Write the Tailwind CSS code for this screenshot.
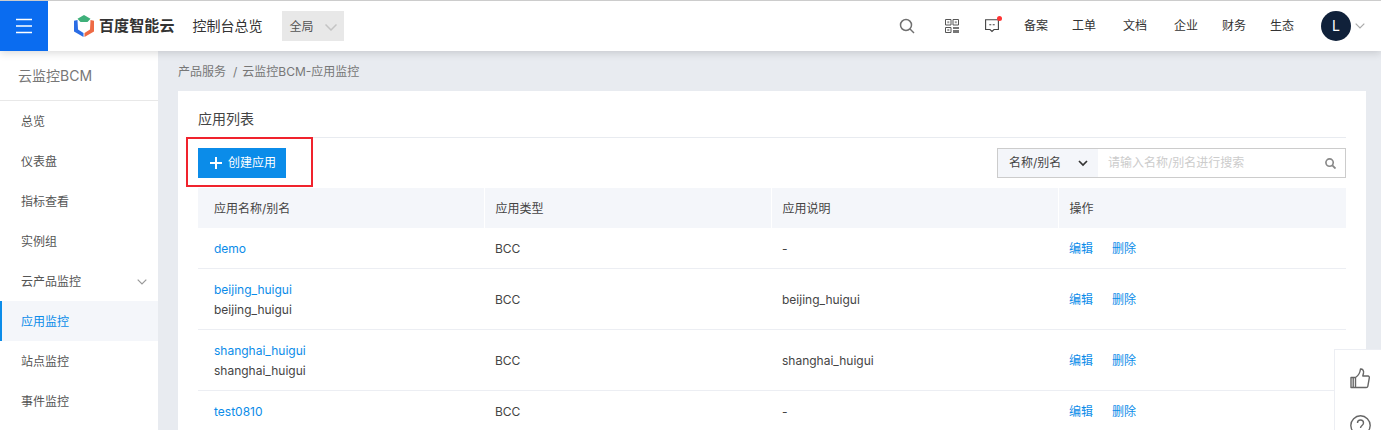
<!DOCTYPE html>
<html lang="zh-CN">
<head>
<meta charset="UTF-8">
<title>云监控BCM-应用监控</title>
<script src="https://cdn.jsdelivr.net/npm/@tailwindcss/browser@4"></script>
</head>
<body class="h-[430px] overflow-hidden bg-[#e8ebf0] text-xs text-[#333] font-['Inter','Noto_Sans_CJK_SC',sans-serif]">

<!-- top nav -->
<header class="relative z-10 flex h-[51px] items-center border-t border-[#ccc] bg-white shadow-[0_2px_8px_rgba(0,0,0,0.15)]">
    <div class="flex h-[50px] w-12 shrink-0 items-center justify-center bg-[#0a6cf0]">
        <svg width="16" height="16" viewBox="0 0 16 16"><path d="M0 1.500h16M0 8h16M0 14.500h16" stroke="#fff" stroke-width="1.700"/></svg>
    </div>
    <svg class="ml-[26px] shrink-0" width="20" height="22" viewBox="0 0 20 22">
        <path d="M10 0l6.500 3.800-3 3.200h-7l-3-3.200z" fill="#3fb07a"/>
        <path d="M0 5.800l3.500-.8.500 9.500 5.500 3.500v4L0 16.500z" fill="#2b6de5"/>
        <path d="M20 5.800l-3.500-.8-.5 9.500-5.500 3.500v4l9.500-5.500z" fill="#ee6a45"/>
    </svg>
    <span class="ml-[5px] text-[15px] font-bold tracking-[0.1px] text-[#333]">百度智能云</span>
    <span class="ml-[18px] text-sm text-[#333]">控制台总览</span>
    <div class="ml-[19px] flex h-[30px] w-[62px] items-center bg-[#e8e8e8] pt-[2px] pl-2 text-[#555]">
        全局
        <svg class="ml-[11px]" width="12" height="7" viewBox="0 0 12 7"><path d="M.5.500l5.500 5.500 5.500-5.500" fill="none" stroke="#c4c4c4" stroke-width="1.500"/></svg>
    </div>

    <div class="ml-auto flex items-center">
        <svg width="16" height="16" viewBox="0 0 16 16"><circle cx="7" cy="7" r="5.500" fill="none" stroke="#707070" stroke-width="1.500"/><path d="M11 11l4 4" stroke="#707070" stroke-width="1.500"/></svg>
        <svg class="ml-[30px]" width="14" height="14" viewBox="0 0 14 14" fill="none" stroke="#555">
            <path d="M.5.500h5.500v5.500h-5.500zM8 .5h5.500v5.500H8zM.5 8.500h5.500v5h-5.500z"/>
            <path d="M2.300 2.300h2v2h-2zM9.800 2.300h2v2h-2zM2.300 10h2v2h-2z" fill="#999" stroke="none"/>
            <path d="M8 8h6v2H8zM8 11h6v3H8z" fill="#777" stroke="none"/>
        </svg>
        <div class="relative ml-[26px] h-[15px] w-[14px]">
            <svg width="14" height="15" viewBox="0 0 14 15" fill="none" stroke="#444" stroke-width="1.100"><path d="M.6.800h12.800v9.700H9l-2 2-2-2H.6z"/><path d="M4.300 5.700h2M7.700 5.700h2"/></svg>
            <span class="absolute -top-[3px] -right-[3px] size-[5px] rounded-full bg-[#f33]"></span>
        </div>
        <span class="ml-[25px]">备案</span>
        <span class="ml-[24px]">工单</span>
        <span class="ml-[27px]">文档</span>
        <span class="ml-[27px]">企业</span>
        <span class="ml-[24px]">财务</span>
        <span class="ml-[24px]">生态</span>
        <div class="ml-[27px] flex size-[30px] items-center justify-center rounded-full bg-[#10213a] text-sm text-white">L</div>
        <svg class="mr-[16px] ml-[4px]" width="10" height="6" viewBox="0 0 10 6"><path d="M.7.700l4.300 4.300 4.300-4.300" fill="none" stroke="#aaa" stroke-width="1.200"/></svg>
    </div>
</header>

<div class="flex">
    <!-- sidebar -->
    <aside class="h-[379px] w-[158px] shrink-0 bg-white text-[#555]">
        <div class="flex h-[50px] items-center border-b border-[#e8e8e8] pl-[18px] text-sm text-[#777]">云监控BCM</div>
        <div class="flex h-10 items-center pt-[2px] pl-[21px]">总览</div>
        <div class="flex h-10 items-center pt-[2px] pl-[21px]">仪表盘</div>
        <div class="flex h-10 items-center pt-[2px] pl-[21px]">指标查看</div>
        <div class="flex h-10 items-center pt-[2px] pl-[21px]">实例组</div>
        <div class="flex h-10 items-center justify-between pt-[2px] pr-[11px] pl-[21px]">
            云产品监控
            <svg width="10" height="6" viewBox="0 0 10 6"><path d="M.7.700l4.300 4.300 4.300-4.300" fill="none" stroke="#999" stroke-width="1.200"/></svg>
        </div>
        <div class="flex h-10 items-center border-l-2 border-[#0b8ce9] bg-[#f4f6fa] pt-[2px] pl-[19px] text-[#0b8ce9]">应用监控</div>
        <div class="flex h-10 items-center pt-[2px] pl-[21px]">站点监控</div>
        <div class="flex h-10 items-center pt-[2px] pl-[21px]">事件监控</div>
    </aside>

    <main class="min-w-0 flex-1 pl-5 pr-[15px]">
        <div class="flex h-10 items-center pt-[2px] text-[#777]">产品服务<span class="ml-[7px] mr-[5px]">/</span>云监控BCM-应用监控</div>

        <section class="relative bg-white px-5 pb-10">
            <h2 class="flex h-[47px] items-end border-b border-[#e8ebf0] pb-[8px] text-sm font-normal text-[#444]">应用列表</h2>

            <!-- red annotation -->
            <div class="absolute top-[46px] left-2 h-[50px] w-[127px] border-2 border-[#f0232d]"></div>

            <div class="flex items-center justify-between py-[10px]">
                <button class="flex h-[30px] w-[88px] items-center bg-[#0b8ce9] pl-3 text-white">
                    <svg width="12" height="12" viewBox="0 0 12 12"><path d="M6 0v12M0 6h12" stroke="#fff" stroke-width="2"/></svg>
                    <span class="ml-[6px]">创建应用</span>
                </button>
                <div class="flex h-[30px] w-[349px] border border-[#ccc]">
                    <div class="flex w-[100px] items-center bg-[#f4f6fa] pl-[11px] text-[#444]">
                        名称/别名
                        <svg class="ml-[17px]" width="10" height="7" viewBox="0 0 10 7"><path d="M1 1l4 4 4-4" fill="none" stroke="#333" stroke-width="1.700"/></svg>
                    </div>
                    <div class="flex flex-1 items-center justify-between pr-[9px] pl-[10px] text-[#ccc]">
                        请输入名称/别名进行搜索
                        <svg width="11" height="11" viewBox="0 0 12 12"><circle cx="5" cy="5" r="4" fill="none" stroke="#888" stroke-width="1.800"/><path d="M8 8l3.500 3.500" stroke="#888" stroke-width="2"/></svg>
                    </div>
                </div>
            </div>

            <table class="w-[1148px] table-fixed border-collapse text-left text-[#444]">
                <colgroup><col class="w-[286px]"><col class="w-[287px]"><col class="w-[287px]"><col class="w-[288px]"></colgroup>
                <thead>
                    <tr class="h-10 bg-[#f4f6fa]">
                        <th class="pt-[2px] pl-4 font-normal">应用名称/别名</th>
                        <th class="border-l border-white pt-[2px] pl-[11px] font-normal">应用类型</th>
                        <th class="border-l border-white pt-[2px] pl-[11px] font-normal">应用说明</th>
                        <th class="border-l border-white pt-[2px] pl-[11px] font-normal">操作</th>
                    </tr>
                </thead>
                <tbody>
                    <tr class="h-10 border-b border-[#eceef3]">
                        <td class="pt-[2px] pl-4 text-[#0b8ce9]">demo</td>
                        <td class="pt-[2px] pl-[11px]">BCC</td>
                        <td class="pt-[2px] pl-[11px]">-</td>
                        <td class="pt-[2px] pl-[11px] text-[#0b8ce9]"><span class="mr-[19px]">编辑</span>删除</td>
                    </tr>
                    <tr class="h-[61px] border-b border-[#eceef3]">
                        <td class="pt-[2px] pl-4 leading-5"><div class="text-[#0b8ce9]">beijing_huigui</div><div>beijing_huigui</div></td>
                        <td class="pt-[2px] pl-[11px]">BCC</td>
                        <td class="pt-[2px] pl-[11px]">beijing_huigui</td>
                        <td class="pt-[3px] pl-[11px] text-[#0b8ce9]"><span class="mr-[19px]">编辑</span>删除</td>
                    </tr>
                    <tr class="h-[61px] border-b border-[#eceef3]">
                        <td class="pt-[2px] pl-4 leading-5"><div class="text-[#0b8ce9]">shanghai_huigui</div><div>shanghai_huigui</div></td>
                        <td class="pt-[2px] pl-[11px]">BCC</td>
                        <td class="pt-[2px] pl-[11px]">shanghai_huigui</td>
                        <td class="pt-[3px] pl-[11px] text-[#0b8ce9]"><span class="mr-[19px]">编辑</span>删除</td>
                    </tr>
                    <tr class="h-[41px]">
                        <td class="pt-[2px] pl-4 text-[#0b8ce9]">test0810</td>
                        <td class="pt-[2px] pl-[11px]">BCC</td>
                        <td class="pt-[2px] pl-[11px]">-</td>
                        <td class="pt-[3px] pl-[11px] text-[#0b8ce9]"><span class="mr-[19px]">编辑</span>删除</td>
                    </tr>
                </tbody>
            </table>
        </section>
    </main>
</div>

<!-- floating feedback panel -->
<div class="fixed top-[349px] left-[1334px] flex h-[120px] w-[60px] flex-col border border-[#eceef3] bg-white pt-[18px] pl-[15px]">
    <svg width="21" height="21" viewBox="0 0 21 21" fill="none" stroke="#666" stroke-width="1.400" stroke-linejoin="round"><path d="M5.500 9.500h-4.500v10h4.500zM5.500 9.500c2.500-1.500 4.500-4.500 5-8.500 2-.3 3.500 1.500 3 4l-.7 3h5.200c1 0 1.500.8 1.300 1.800l-1.500 8.500c-.2.800-.7 1.200-1.500 1.200h-11.300"/><path d="M3.200 9.500v10"/></svg>
    <svg class="mt-[26px]" width="21" height="21" viewBox="0 0 21 21" fill="none" stroke="#666" stroke-width="1.400"><circle cx="10.500" cy="10.500" r="9.700"/><path d="M7.500 8c0-4 6-4 6 0 0 2.500-3 2.500-3 5"/></svg>
</div>

</body>
</html>
